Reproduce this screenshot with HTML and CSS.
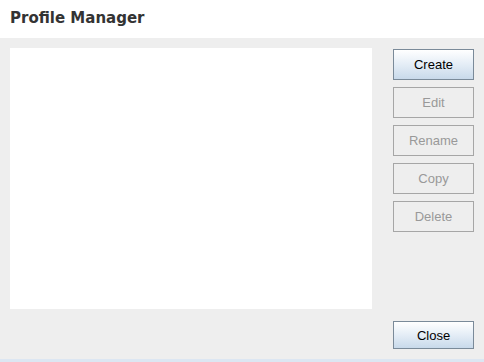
FILE: index.html
```html
<!DOCTYPE html>
<html>
<head>
  <title>Profile Manager</title>
  <link rel="stylesheet" href="styles.css">
</head>
<body>
  <!-- Title bar -->
  <div class="header">Profile Manager</div>

  <!-- Main area -->
  <div class="main">
    <div class="profile-list"></div>

    <div class="actions">
      <button class="button">Create</button>
      <button class="button" disabled>Edit</button>
      <button class="button" disabled>Rename</button>
      <button class="button" disabled>Copy</button>
      <button class="button" disabled>Delete</button>
    </div>

    <div class="footer">
      <button class="button close-btn">Close</button>
    </div>
  </div>

  <div class="status-strip"></div>
</body>
</html>
```

FILE: styles.css
```css
/* Profile Manager dialog */
body {
  margin: 0;
  background-color: #ffffff;
  font-family: "Liberation Sans", Arial, sans-serif;
}
.header {
  height: 38px;
  box-sizing: border-box;
  padding: 9px 0 0 10px;
  font-family: "DejaVu Sans", Tahoma, sans-serif;
  font-weight: bold;
  font-size: 15px;
  color: #333333;
  background-color: #ffffff;
}
.main {
  display: grid;
  grid-template-columns: 362px 81px;
  grid-template-rows: 261px 28px;
  column-gap: 21px;
  row-gap: 12px;
  padding: 10px 10px 10px 10px;
  height: 321px;
  box-sizing: border-box;
  background-color: #eeeeee;
}
.profile-list {
  background-color: #ffffff;
}
.actions {
  display: flex;
  flex-direction: column;
  gap: 7px;
  padding-top: 1px;
}
.footer {
  grid-column: 2;
}
.button {
  width: 81px;
  height: 31px;
  box-sizing: border-box;
  border: 1px solid #7a8a99;
  background: linear-gradient(to bottom, #ffffff 0%, #e4edf6 50%, #c8d9ea 100%);
  color: #000000;
  font-family: "Liberation Sans", Arial, sans-serif;
  font-size: 13px;
  padding: 0;
  margin: 0;
  cursor: pointer;
}
.button:disabled {
  border-color: #a6a6a6;
  background: #eeeeee;
  color: #999999;
  cursor: default;
}
.close-btn {
  height: 28px;
}
.status-strip {
  height: 3px;
  background-color: #dce6f2;
}
```
